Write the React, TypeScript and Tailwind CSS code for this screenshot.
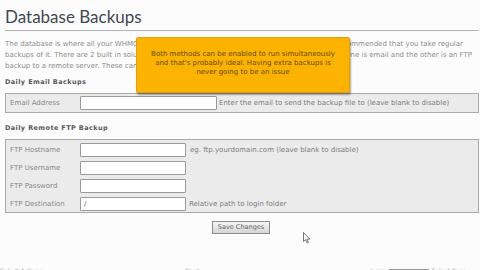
import React from "react";

const small = "font-['DejaVu_Sans',Verdana,sans-serif]";

function FieldRow({label, value = "", width, hint, hintGap}: {label: string; value?: string; width: string; hint?: string; hintGap?: string}) {
  return (
    <div className="flex items-center h-[14px]">
      <div className="w-[74px] pl-[4px] text-[7px] text-[#888]">{label}</div>
      <div className={`${width} h-[14px] bg-white border border-[#9a9a9a] rounded-[1px] text-[7px] text-[#666] pl-[3px] leading-[12px]`}>
        {value}
      </div>
      {hint && <div className={`${hintGap} text-[7px] text-[#7c7c7c] whitespace-nowrap`}>{hint}</div>}
    </div>
  );
}

export default function App() {
  return (
    <div className={`relative w-[480px] h-[270px] overflow-hidden bg-[#fcfcfc] pl-[5px] pr-[1px] ${small}`}>
      {/* Title */}
      <div className="h-[31px] border-b border-[#b4b4b4] pt-[7px]">
        <h1 className="font-['Lato',sans-serif] text-[17px] leading-[20px] text-[#3e4852]">
          Database Backups
        </h1>
      </div>

      {/* Intro */}
      <div className="mt-[8px] text-[7px] leading-[11px] text-[#8c8c8c] whitespace-nowrap">
        <div className="w-[458px] flex justify-between">
          <span>The database is where all your WHMCS data is stored</span>
          <span>so it is recommended that you take regular</span>
        </div>
        <div className="w-[467px] flex justify-between">
          <span>backups of it. There are 2 built in solutions</span>
          <span>for backups. One is email and the other is an FTP</span>
        </div>
        <div>backup to a remote server. These can be configured below.</div>
      </div>

      <div className="mt-[5px] text-[6.5px] leading-[11px] font-bold text-[#585858] tracking-[0.4px]">Daily Email Backups</div>
      <div className="mt-[5px] h-[20px] bg-[#ebebeb] border border-[#a9a9a9] flex items-center">
        <FieldRow
          label="Email Address"
          width="w-[137px]"
          hint="Enter the email to send the backup file to (leave blank to disable)"
          hintGap="ml-[2px]"
        />
      </div>

      <div className="mt-[10px] text-[6.5px] leading-[11px] font-bold text-[#585858] tracking-[0.4px]">Daily Remote FTP Backup</div>
      <div className="mt-[5px] h-[74px] bg-[#ebebeb] border border-[#a9a9a9] pt-[3px] flex flex-col gap-[4px]">
        <FieldRow label="FTP Hostname" width="w-[106px]" hint="eg. ftp.yourdomain.com (leave blank to disable)" hintGap="ml-[4px]" />
        <FieldRow label="FTP Username" width="w-[106px]" />
        <FieldRow label="FTP Password" width="w-[106px]" />
        <FieldRow label="FTP Destination" value="/" width="w-[106px]" hint="Relative path to login folder" hintGap="ml-[3px]" />
      </div>

      <div className="mt-[8px] flex justify-center pr-[2px]">
        <button className="w-[58px] h-[13px] border border-[#8c8c8c] bg-gradient-to-b from-[#f4f4f4] to-[#d6d6d6] text-[6.5px] text-[#666] leading-[11px]">
          Save Changes
        </button>
      </div>

      {/* Bottom row, cut off */}
      <div className="mt-[32px] flex items-center gap-[3px] text-[6px] text-[#9a9a9a] whitespace-nowrap -ml-[5px]">
        <span>Select Actions</span>
        <div className="w-[137px] h-px bg-[#c8c8c8]" />
        <span>Next</span>
        <div className="w-[165px] h-px bg-[#c8c8c8]" />
        <span>Jump</span>
        <div className="w-[40px] h-[3px] border-t border-x border-[#999]" />
        <span>Select Page</span>
      </div>

      {/* Tooltip overlay */}
      <div className="absolute left-[136px] top-[37px] w-[214px] h-[56px] bg-[#fbb300] border border-[#e3a000] rounded-[2px] shadow-[1px_2px_2px_rgba(0,0,0,0.35)] flex flex-col items-center pt-[12px] text-[7px] leading-[9px] text-[#6a4800]">
        <div>Both methods can be enabled to run simultaneously</div>
        <div>and that's probably ideal. Having extra backups is</div>
        <div>never going to be an issue</div>
      </div>

      {/* Mouse cursor */}
      <svg className="absolute left-[303px] top-[232px]" width="8" height="12" viewBox="0 0 8 12">
        <path d="M0.5 0.5 L0.5 9.5 L2.6 7.6 L4.1 11 L5.4 10.4 L3.9 7.1 L6.8 7.1 Z" fill="#fff" stroke="#555" strokeWidth="0.8" strokeLinejoin="round" />
      </svg>
    </div>
  );
}
